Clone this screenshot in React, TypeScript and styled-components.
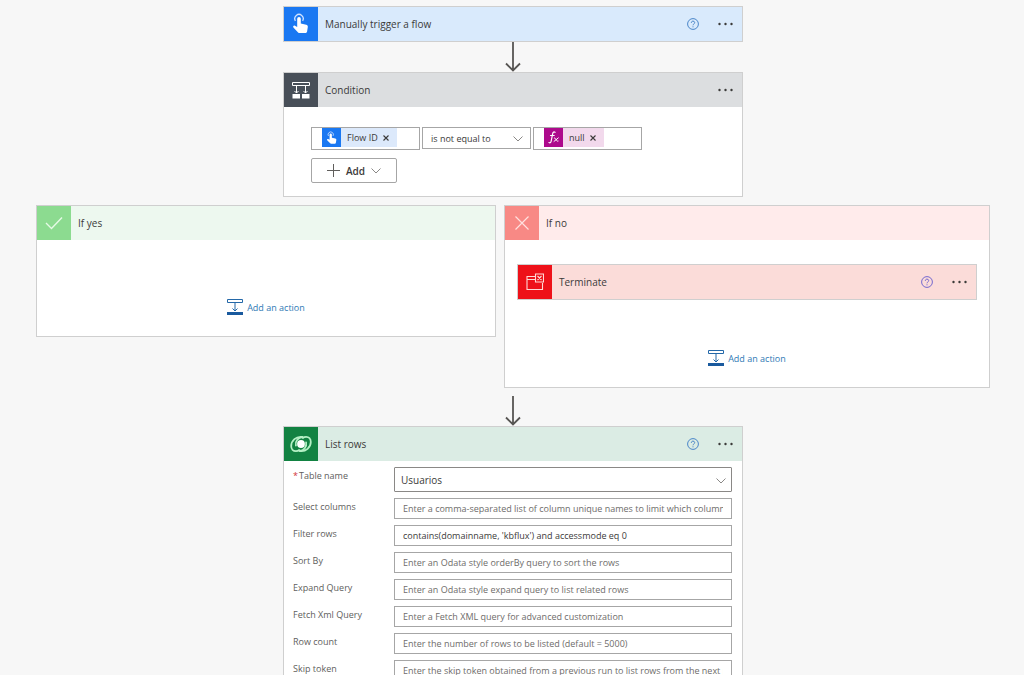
import React, { useState } from "react";
import styled, { createGlobalStyle } from "styled-components";

const GlobalStyle = createGlobalStyle`
  *, *::before, *::after { box-sizing: border-box; }
  body {
    margin: 0;
    background: #f7f7f7;
    color: #3b3a39;
    font-family: "Open Sans", "Noto Sans", sans-serif;
    font-size: 9px;
  }
  button, input, select { font: inherit; color: inherit; }
`;

const Canvas = styled.main`
  display: flex;
  flex-direction: column;
  align-items: center;
  height: 100vh;
  overflow: hidden;
  padding: 6px 0 0 2px;
`;

const Card = styled.section<{ $wide?: boolean }>`
  flex: none;
  width: ${(p) => (p.$wide ? "100%" : "460px")};
  max-width: 100%;
  border: 1px solid #cfcfcf;
  background: #fff;
`;

const Header = styled.header<{ $bg: string }>`
  display: flex;
  align-items: center;
  height: 34px;
  padding-right: 8px;
  background: ${(p) => p.$bg};
`;

const IconBox = styled.span<{ $bg: string }>`
  display: flex;
  align-items: center;
  justify-content: center;
  flex: none;
  width: 34px;
  height: 34px;
  background: ${(p) => p.$bg};
`;

const Title = styled.h2`
  flex: 1;
  margin: 0;
  padding-left: 7px;
  font-size: 10px;
  font-weight: 400;
  line-height: 16px;
`;

const IconButton = styled.button`
  display: flex;
  align-items: center;
  justify-content: center;
  padding: 0;
  border: 0;
  background: none;
  cursor: pointer;
`;

const HeaderActions = styled.div`
  display: flex;
  align-items: center;
  gap: 19px;
`;

const Connector = styled.div<{ $spaced?: boolean }>`
  flex: none;
  height: ${(p) => (p.$spaced ? "38px" : "30px")};
  padding-top: ${(p) => (p.$spaced ? "8px" : "0")};
  svg { display: block; }
`;

const ConditionBody = styled.div`
  display: flex;
  flex-direction: column;
  align-items: flex-start;
  gap: 8px;
  padding: 20px 27px 13px;
`;

const Expression = styled.div`
  display: flex;
  align-items: flex-start;
  gap: 2px;
`;

const TokenField = styled.div`
  display: flex;
  width: 109px;
  height: 23px;
  padding-left: 10px;
  border: 1px solid #a6a6a6;
  background: #fff;
`;

const TokenInput = styled.input`
  flex: 1;
  min-width: 0;
  padding: 0;
  border: 0;
  outline: 0;
  background: none;
`;

const Token = styled.span<{ $bg: string }>`
  display: flex;
  align-items: center;
  flex: none;
  height: 19px;
  padding-right: 8px;
  gap: 5px;
  background: ${(p) => p.$bg};
`;

const TokenIcon = styled.span<{ $bg: string }>`
  display: flex;
  align-items: center;
  justify-content: center;
  width: 19px;
  height: 19px;
  margin-right: 1px;
  background: ${(p) => p.$bg};
`;

const SelectBox = styled.div<{ $large?: boolean }>`
  position: relative;
  width: ${(p) => (p.$large ? "100%" : "109px")};
  select {
    display: block;
    width: 100%;
    height: ${(p) => (p.$large ? "25px" : "22px")};
    padding: 0 24px 0 ${(p) => (p.$large ? "6px" : "8px")};
    border: 1px solid ${(p) => (p.$large ? "#8a8886" : "#a6a6a6")};
    border-radius: ${(p) => (p.$large ? "1px" : "0")};
    background: #fff;
    font-size: ${(p) => (p.$large ? "10px" : "9px")};
    appearance: none;
  }
  svg {
    position: absolute;
    right: ${(p) => (p.$large ? "6px" : "8px")};
    top: 50%;
    margin-top: -2px;
    pointer-events: none;
  }
`;

const AddButton = styled.button`
  display: flex;
  align-items: center;
  gap: 6px;
  height: 25px;
  padding: 0 15px;
  border: 1px solid #a6a6a6;
  border-radius: 2px;
  background: #fff;
  font-size: 10px;
  font-weight: 600;
  cursor: pointer;
`;

const Branches = styled.div`
  display: grid;
  grid-template-columns: 460fr 486fr;
  align-items: start;
  flex: none;
  gap: 8px;
  width: 954px;
  max-width: 100%;
  margin-top: 8px;
`;

const BranchBody = styled.div<{ $top: number }>`
  display: flex;
  flex-direction: column;
  align-items: center;
  gap: 50px;
  padding: ${(p) => p.$top}px 12px 21px;
`;

const AddAction = styled.button`
  display: flex;
  align-items: center;
  gap: 4px;
  height: 16px;
  padding: 0;
  border: 0;
  background: none;
  color: #2f7ab5;
  cursor: pointer;
`;

const Form = styled.form`
  display: flex;
  flex-direction: column;
  gap: 6px;
  padding: 6px 10px 6px 9px;
`;

const Field = styled.div`
  display: grid;
  grid-template-columns: 101px 1fr;
  align-items: start;
`;

const Label = styled.label`
  color: #605e5c;
  line-height: 18px;
`;

const Required = styled.span`
  margin-right: 1px;
  color: #d13438;
`;

const TextInput = styled.input`
  width: 100%;
  height: 21px;
  padding: 0 8px 1px;
  border: 1px solid #a6a6a6;
  outline: 0;
  background: #fff;
  &::placeholder { color: #6e6c6a; opacity: 1; }
`;

const TapIcon = ({ size }: { size: number }) => (
  <svg width={size} height={size} viewBox="0 0 22 22" fill="none" aria-hidden="true">
    <path d="M5.4 7.8A4.2 4.2 0 1 1 12.6 7.8" stroke="#cfe2ff" strokeWidth="1.3" />
    <path
      d="M7.2 5.8a1.8 1.8 0 0 1 3.600 0v4.800l5.400 1.200c1.100.2 1.800 1.100 1.600 2.200l-.7 4.600c-.1.900-.8 1.500-1.700 1.500H9.600c-.6 0-1.100-.2-1.500-.7L3.400 14.400c-.8-1.100.5-2.300 1.600-1.700l2.200 1.200z"
      fill="#fff"
    />
  </svg>
);

const ConditionIcon = () => (
  <svg width="18" height="18" viewBox="0 0 18 18" fill="none" stroke="#fff" aria-hidden="true">
    <path d="M.5 1.500h17v3H.5z" />
    <path d="M4.500 4.500V12M13.500 4.500V12M2.500 10l2 2 2-2M11.500 10l2 2 2-2" />
    <path d="M.5 13h7.500v4.500H.5zM10 13h7.500v4.500H10z" fill="#fff" stroke="none" />
  </svg>
);

const CheckIcon = () => (
  <svg width="18" height="14" viewBox="0 0 18 14" fill="none" stroke="#e6fae6" strokeWidth="1.400" aria-hidden="true">
    <path d="M1 7l5.500 5.500L17 1.500" />
  </svg>
);

const CrossIcon = () => (
  <svg width="14" height="14" viewBox="0 0 14 14" stroke="#ffe1df" strokeWidth="1.200" aria-hidden="true">
    <path d="M.5.5l13 13M13.500.5l-13 13" />
  </svg>
);

const TerminateIcon = () => (
  <svg width="18" height="18" viewBox="0 0 18 18" fill="none" stroke="#ffd9d6" strokeWidth="1.100" aria-hidden="true">
    <path d="M9 3.500H1v13h15.500V10M1 6.500h8" />
    <path d="M9.500 1h8v8h-8zM11.500 3l4 4M15.500 3l-4 4" />
  </svg>
);

const DataverseIcon = () => (
  <svg width="22" height="18" viewBox="0 0 22 18" fill="none" stroke="#b5f0c5" strokeWidth="1.800" strokeLinecap="round" aria-hidden="true">
    <path d="M12.500 2C6 .8 1.200 6 1.200 11c0 3.200 2.100 5.200 4.700 5.200 1.400 0 2.400-.4 3.300-1.200M5.900 10.500C5 6 8.200 2.600 12.500 2" />
    <path d="M9.500 16C16 17.200 20.800 12 20.800 7c0-3.200-2.100-5.200-4.700-5.200-1.400 0-2.400.4-3.300 1.200M16.100 7.500C17 12 13.800 15.400 9.500 16" />
    <circle cx="11" cy="9" r="3.900" fill="#fff" stroke="none" />
  </svg>
);

const HelpIcon = ({ color }: { color: string }) => (
  <svg width="12" height="12" viewBox="0 0 12 12" fill="none" stroke={color} aria-hidden="true">
    <circle cx="6" cy="6" r="5.400" />
    <path d="M4.300 4.800c0-2.300 3.400-2.200 3.400-.1C7.700 5.900 6 6 6 7.300M6 8.300v1" />
  </svg>
);

const DotsIcon = () => (
  <svg width="16" height="12" viewBox="0 0 16 12" fill="#3b3a39" aria-hidden="true">
    <circle cx="1.500" cy="6" r="1.200" />
    <circle cx="7.500" cy="6" r="1.200" />
    <circle cx="13.500" cy="6" r="1.200" />
  </svg>
);

const Chevron = () => (
  <svg width="10" height="6" viewBox="0 0 10 6" fill="none" stroke="#8a8886" aria-hidden="true">
    <path d="M.5.500L5 5 9.500.500" />
  </svg>
);

const PlusIcon = () => (
  <svg width="13" height="13" viewBox="0 0 13 13" stroke="#605e5c" aria-hidden="true">
    <path d="M6.500 0v13M0 6.500h13" />
  </svg>
);

const RemoveIcon = () => (
  <svg width="6" height="6" viewBox="0 0 6 6" stroke="#3b3a39" strokeWidth="1.100" aria-hidden="true">
    <path d="M.5.500l5 5M5.500.500l-5 5" />
  </svg>
);

const FxIcon = () => (
  <svg width="13" height="13" viewBox="0 0 13 13" fill="none" stroke="#fff" strokeLinecap="round" aria-hidden="true">
    <path d="M8 1.300C6.600.300 5.900 1.500 5.600 3L4.200 10c-.3 1.500-1 2.300-2.200 1.600M3.500 4.500h3.700" strokeWidth="1.200" />
    <path d="M7.300 7c1.600-1 1.900 4.300 3.800 3.200M11.300 6.900L7 10.400" />
  </svg>
);

const InsertIcon = () => (
  <svg width="16" height="16" viewBox="0 0 16 16" fill="none" stroke="#2468a8" aria-hidden="true">
    <path d="M.5.500h15v3H.5zM8 3.500V12M5.500 9.500L8 12l2.500-2.500" />
    <path d="M0 13h16v3H0z" fill="#1a5a9e" stroke="none" />
  </svg>
);

const Arrow = () => (
  <svg width="16" height="30" viewBox="0 0 16 30" fill="none" stroke="#575553" strokeWidth="1.800" aria-hidden="true">
    <path d="M8 0v28M1 21.500l7 7 7-7" />
  </svg>
);

type CardHeaderProps = {
  title: string;
  bg: string;
  iconBg: string;
  icon: React.ReactNode;
  helpColor?: string;
  menu?: boolean;
};

const CardHeader = ({ title, bg, iconBg, icon, helpColor, menu }: CardHeaderProps) => (
  <Header $bg={bg}>
    <IconBox $bg={iconBg}>{icon}</IconBox>
    <Title>{title}</Title>
    <HeaderActions>
      {helpColor && (
        <IconButton type="button" aria-label={`Help for ${title}`}>
          <HelpIcon color={helpColor} />
        </IconButton>
      )}
      {menu && (
        <IconButton type="button" aria-label={`Menu for ${title}`}>
          <DotsIcon />
        </IconButton>
      )}
    </HeaderActions>
  </Header>
);

const AddActionButton = () => (
  <AddAction type="button">
    <InsertIcon />
    Add an action
  </AddAction>
);

const queryFields = [
  { id: "select", label: "Select columns", hint: "Enter a comma-separated list of column unique names to limit which columns are listed" },
  { id: "filter", label: "Filter rows", hint: "Enter an Odata style filter expression" },
  { id: "sort", label: "Sort By", hint: "Enter an Odata style orderBy query to sort the rows" },
  { id: "expand", label: "Expand Query", hint: "Enter an Odata style expand query to list related rows" },
  { id: "fetch", label: "Fetch Xml Query", hint: "Enter a Fetch XML query for advanced customization" },
  { id: "count", label: "Row count", hint: "Enter the number of rows to be listed (default = 5000)" },
  { id: "skip", label: "Skip token", hint: "Enter the skip token obtained from a previous run to list rows from the next page" },
];

export default function App() {
  const [values, setValues] = useState<Record<string, string>>({
    filter: "contains(domainname, 'kbflux') and accessmode eq 0",
  });

  return (
    <>
      <GlobalStyle />
      <Canvas>
        <Card>
          <CardHeader title="Manually trigger a flow" bg="#d9eafc" iconBg="#1a78f2" icon={<TapIcon size={22} />} helpColor="#4a86c8" menu />
        </Card>
        <Connector><Arrow /></Connector>
        <Card>
          <CardHeader title="Condition" bg="#dcdee0" iconBg="#484f58" icon={<ConditionIcon />} menu />
          <ConditionBody>
            <Expression>
              <TokenField>
                <Token $bg="#dce9fb">
                  <TokenIcon $bg="#1a78f2"><TapIcon size={14} /></TokenIcon>
                  Flow ID
                  <IconButton type="button" aria-label="Remove Flow ID"><RemoveIcon /></IconButton>
                </Token>
                <TokenInput aria-label="Left value" />
              </TokenField>
              <SelectBox>
                <select aria-label="Operator" defaultValue="ne">
                  <option value="ne">is not equal to</option>
                  <option value="eq">is equal to</option>
                </select>
                <Chevron />
              </SelectBox>
              <TokenField>
                <Token $bg="#f2d9ec">
                  <TokenIcon $bg="#ad0a8c"><FxIcon /></TokenIcon>
                  null
                  <IconButton type="button" aria-label="Remove null"><RemoveIcon /></IconButton>
                </Token>
                <TokenInput aria-label="Right value" />
              </TokenField>
            </Expression>
            <AddButton type="button">
              <PlusIcon />
              Add
              <Chevron />
            </AddButton>
          </ConditionBody>
        </Card>
        <Branches>
          <Card $wide>
            <CardHeader title="If yes" bg="#edf8ef" iconBg="#8cdb90" icon={<CheckIcon />} />
            <BranchBody $top={59}>
              <AddActionButton />
            </BranchBody>
          </Card>
          <Card $wide>
            <CardHeader title="If no" bg="#ffebeb" iconBg="#f88985" icon={<CrossIcon />} />
            <BranchBody $top={24}>
              <Card $wide>
                <CardHeader title="Terminate" bg="#fbdcd9" iconBg="#ee1119" icon={<TerminateIcon />} helpColor="#7468cf" menu />
              </Card>
              <AddActionButton />
            </BranchBody>
          </Card>
        </Branches>
        <Connector $spaced><Arrow /></Connector>
        <Card>
          <CardHeader title="List rows" bg="#dbece4" iconBg="#128242" icon={<DataverseIcon />} helpColor="#4a86c8" menu />
          <Form>
            <Field>
              <Label htmlFor="table"><Required>*</Required>Table name</Label>
              <SelectBox $large>
                <select id="table" defaultValue="Usuarios">
                  <option>Usuarios</option>
                </select>
                <Chevron />
              </SelectBox>
            </Field>
            {queryFields.map((f) => (
              <Field key={f.id}>
                <Label htmlFor={f.id}>{f.label}</Label>
                <TextInput
                  id={f.id}
                  placeholder={f.hint}
                  value={values[f.id] ?? ""}
                  onChange={(e) => setValues({ ...values, [f.id]: e.target.value })}
                />
              </Field>
            ))}
          </Form>
        </Card>
      </Canvas>
    </>
  );
}
